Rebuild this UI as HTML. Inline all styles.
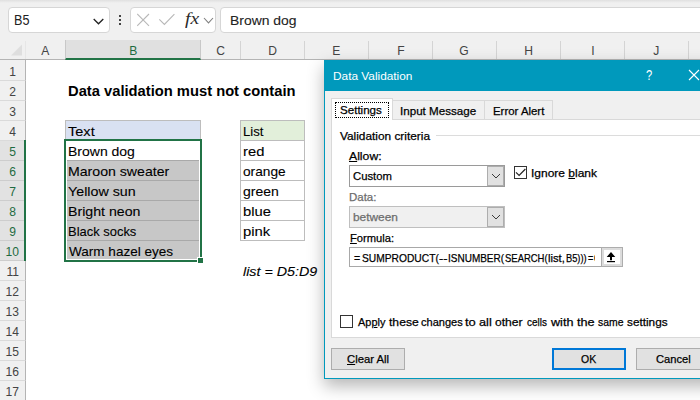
<!DOCTYPE html>
<html><head><meta charset="utf-8"><title>Data validation must not contain</title>
<style>
*{box-sizing:border-box;margin:0;padding:0}
html,body{width:700px;height:400px;overflow:hidden;background:#fff}
body{position:relative;font-family:"Liberation Sans",sans-serif;color:#000}
.a{position:absolute}
.t{position:absolute;white-space:nowrap;line-height:1}
.t>span{display:inline-block;transform-origin:0 50%;white-space:nowrap}
#bar{left:0;top:0;width:700px;height:60px;background:#f0f0f0}
#barhi{left:0;top:0;width:700px;height:3px;background:linear-gradient(#e0e0e0,#f0f0f0)}
.box{background:#fff;border:1px solid #d6d6d6;border-radius:4px}
#colline{left:0;top:59px;width:700px;height:1px;background:#b4b4b4}
.ch{position:absolute;top:41px;height:18px;border-right:1px solid #d4d4d4;font-size:13px;color:#444;text-align:center;line-height:20px}
#rhbg{left:0;top:60px;width:26px;height:340px;background:#f0f0f0;border-right:1px solid #b4b4b4}
.rh{position:absolute;left:0;width:26px;height:20px;border-bottom:1px solid #dadada;border-right:1px solid #b4b4b4;font-size:13px;color:#444;text-align:center;line-height:21px}
.rh.s{background:#e2e2e2;color:#1e6b41;border-right:2px solid #217346;border-bottom-color:#cdcdcd;padding-left:1px}
.cell{position:absolute;height:21px;border:1px solid #bdbdbd;background:#fff}
.cell.g{background:#c7c7c7;border-color:#a9a9a9}
.ch>b,.rh>b{display:inline-block;font-weight:normal;transform:scaleX(.93)}
.ct{font-size:13.2px;color:#000;-webkit-text-stroke-width:0.1px}
.d{font-size:11.5px;color:#000;-webkit-text-stroke-width:0.25px}
</style></head><body>

<!-- formula bar -->
<div class="a" id="bar"></div><div class="a" id="barhi"></div>
<div class="a box" style="left:8px;top:7px;width:102px;height:26px"></div>
<div class="a box" style="left:130px;top:7px;width:86px;height:26px"></div>
<div class="a box" style="left:220px;top:7px;width:500px;height:26px"></div>
<div class="t " style="left:14.48px;top:13px;font-size:14px;color:#222"><span id="nb" style="transform:scaleX(0.9032);">B5</span></div>
<svg class="a" style="left:92px;top:17px" width="13" height="9" viewBox="0 0 13 9"><path d="M1.7 2 L6.5 6.8 L11.3 2" fill="none" stroke="#222" stroke-width="1.3"/></svg>
<div class="a" style="left:119px;top:15px;width:2px;height:2px;background:#444;box-shadow:0 4px 0 #444,0 8px 0 #444"></div>
<svg class="a" style="left:137px;top:13px" width="80" height="16" viewBox="0 0 80 16">
 <path d="M0.2 1 L12 12.8 M12 1 L0.2 12.8" stroke="#b8b8b8" stroke-width="1.1" fill="none"/>
 <path d="M22.3 6.3 L27.4 11.4 L37.4 1.1" stroke="#b8b8b8" stroke-width="1.1" fill="none"/>
 <path d="M67 5 L71.5 9.9 L76 5" stroke="#808080" stroke-width="1.1" fill="none"/>
</svg>
<div class="t " style="left:185.06px;top:10px;font-family:'Liberation Serif',serif;font-style:italic;font-size:17px;color:#2a2a2a"><span id="fx" style="transform:scaleX(1.15);">fx</span></div>
<div class="t ct" style="left:230.41px;top:14px;color:#222"><span id="fb" style="transform:scaleX(1.054);">Brown dog</span></div>

<!-- column headers -->
<div class="a" id="colline"></div>
<svg class="a" style="left:10px;top:44px" width="13" height="12"><path d="M12 0.5 L12 11.5 L1 11.5 Z" fill="#dedede"/></svg>
<div class="ch" style="left:0;width:26px;border-right-color:#e6e6e6"></div>
<div class="ch" style="left:26px;width:39px;border-right:none"><b>A</b></div>
<div class="ch" style="left:65px;top:40px;width:136px;height:20px;line-height:22px;background:#e0e0e0;color:#1e6b41;border-bottom:2px solid #217346;border-left:1px solid #c8c8c8;border-right-color:#c8c8c8"><b>B</b></div>
<div class="ch" style="left:201px;width:40px"><b>C</b></div>
<div class="ch" style="left:241px;width:64px"><b>D</b></div>
<div class="ch" style="left:305px;width:64px"><b>E</b></div>
<div class="ch" style="left:369px;width:64px"><b>F</b></div>
<div class="ch" style="left:433px;width:64px"><b>G</b></div>
<div class="ch" style="left:497px;width:64px"><b>H</b></div>
<div class="ch" style="left:561px;width:64px"><b>I</b></div>
<div class="ch" style="left:625px;width:64px"><b>J</b></div>

<!-- row headers -->
<div class="a" id="rhbg"></div>
<div class="rh" style="top:61px"><b>1</b></div>
<div class="rh" style="top:81px"><b>2</b></div>
<div class="rh" style="top:101px"><b>3</b></div>
<div class="rh" style="top:121px"><b>4</b></div>
<div class="rh s" style="top:141px"><b>5</b></div>
<div class="rh s" style="top:161px"><b>6</b></div>
<div class="rh s" style="top:181px"><b>7</b></div>
<div class="rh s" style="top:201px"><b>8</b></div>
<div class="rh s" style="top:221px"><b>9</b></div>
<div class="rh s" style="top:241px"><b>10</b></div>
<div class="rh" style="top:261px"><b>11</b></div>
<div class="rh" style="top:281px"><b>12</b></div>
<div class="rh" style="top:301px"><b>13</b></div>
<div class="rh" style="top:321px"><b>14</b></div>
<div class="rh" style="top:341px"><b>15</b></div>
<div class="rh" style="top:361px"><b>16</b></div>
<div class="rh" style="top:381px"><b>17</b></div>
<div class="a" style="left:24px;top:140px;width:2px;height:121px;background:#217346"></div>
<!-- sheet cells -->
<div class="t " style="left:67.75px;top:84px;font-size:14px;font-weight:bold"><span id="ttl" style="transform:scaleX(1.052);">Data validation must not contain</span></div>

<div class="cell" style="left:65px;top:120px;width:136px;background:#d9e1f2"></div>
<div class="cell" style="left:65px;top:140px;width:136px"></div>
<div class="cell g" style="left:65px;top:160px;width:136px"></div>
<div class="cell g" style="left:65px;top:180px;width:136px"></div>
<div class="cell g" style="left:65px;top:200px;width:136px"></div>
<div class="cell g" style="left:65px;top:220px;width:136px"></div>
<div class="cell g" style="left:65px;top:240px;width:136px"></div>

<div class="a" style="left:64px;top:139px;width:138px;height:123px;border:2px solid #217346;box-shadow:inset 0 0 0 1px #fff"></div>
<div class="a" style="left:197px;top:257px;width:7px;height:7px;background:#217346;border:1px solid #fff"></div>
<div class="t ct" style="left:68.06px;top:125px;"><span id="c4" style="transform:scaleX(1.104);">Text</span></div>
<div class="t ct" style="left:67.69px;top:145px;"><span id="c5" style="transform:scaleX(1.061);">Brown dog</span></div>
<div class="t ct" style="left:67.68px;top:165px;"><span id="c6" style="transform:scaleX(1.071);">Maroon sweater</span></div>
<div class="t ct" style="left:68.23px;top:185px;"><span id="c7" style="transform:scaleX(1.081);">Yellow sun</span></div>
<div class="t ct" style="left:67.54px;top:205px;"><span id="c8" style="transform:scaleX(1.074);">Bright neon</span></div>
<div class="t ct" style="left:67.77px;top:225px;"><span id="c9" style="transform:scaleX(0.9817);">Black socks</span></div>
<div class="t ct" style="left:68.75px;top:245px;"><span id="c10" style="transform:scaleX(1.027);">Warm hazel eyes</span></div>

<div class="cell" style="left:240px;top:120px;width:65px;background:#e2efda"></div>
<div class="cell" style="left:240px;top:140px;width:65px"></div>
<div class="cell" style="left:240px;top:160px;width:65px"></div>
<div class="cell" style="left:240px;top:180px;width:65px"></div>
<div class="cell" style="left:240px;top:200px;width:65px"></div>
<div class="cell" style="left:240px;top:220px;width:65px"></div>

<div class="t ct" style="left:242.61px;top:125px;"><span id="d4" style="transform:scaleX(0.9949);">List</span></div>
<div class="t ct" style="left:242.76px;top:145px;"><span id="d5" style="transform:scaleX(1.12);">red</span></div>
<div class="t ct" style="left:242.98px;top:165px;"><span id="d6" style="transform:scaleX(1.038);">orange</span></div>
<div class="t ct" style="left:242.97px;top:185px;"><span id="d7" style="transform:scaleX(1.062);">green</span></div>
<div class="t ct" style="left:242.66px;top:205px;"><span id="d8" style="transform:scaleX(1.122);">blue</span></div>
<div class="t ct" style="left:242.65px;top:225px;"><span id="d9" style="transform:scaleX(1.128);">pink</span></div>

<div class="t ct" style="left:243.36px;top:265px;font-style:italic"><span id="d11" style="transform:scaleX(1.084);">list = D5:D9</span></div>

<!-- dialog -->
<div class="a" id="dlg" style="left:324px;top:60px;width:400px;height:319px;background:#f0f0f0;border:1px solid #0099bc;box-shadow:0 7px 16px rgba(0,0,0,.29)"></div>
<div class="a" style="left:324px;top:60px;width:400px;height:31px;background:#0099bc"></div>
<div class="t " style="left:332.8px;top:71px;font-size:11.5px;color:#fff"><span id="dt" style="transform:scaleX(1.029);">Data Validation</span></div>
<div class="t " style="left:646.1px;top:68px;font-size:14px;color:#fff"><span id="qm" style="transform:scaleX(0.8);">?</span></div>
<svg class="a" style="left:686px;top:68px" width="14" height="16"><path d="M3 2 L13 12 M13 2 L3 12" stroke="#fff" stroke-width="1.1" fill="none"/></svg>

<!-- tab page -->
<div class="a" style="left:331px;top:119px;width:400px;height:219px;background:#fff;border:1px solid #d9d9d9"></div>
<div class="a" style="left:393px;top:100px;width:92px;height:20px;background:#f0f0f0;border:1px solid #d9d9d9;border-left:none"></div>
<div class="a" style="left:485px;top:100px;width:68px;height:20px;background:#f0f0f0;border:1px solid #d9d9d9;border-left:none"></div>
<div class="a" style="left:331px;top:98px;width:62px;height:22px;background:#fff;border:1px solid #d9d9d9;border-bottom:none"></div>
<div class="a" style="left:335px;top:102px;width:54px;height:16px;border:1px dotted #000"></div>
<div class="t d" style="left:339.95px;top:105px;"><span id="tb1" style="transform:scaleX(1.007);">Settings</span></div>
<div class="t d" style="left:399.62px;top:106px;"><span id="tb2" style="transform:scaleX(1.01);">Input Message</span></div>
<div class="t d" style="left:493.26px;top:106px;"><span id="tb3" style="transform:scaleX(0.9917);">Error Alert</span></div>

<div class="t d" style="left:340.33px;top:131px;"><span id="vc" style="transform:scaleX(1.03);">Validation criteria</span></div>
<div class="a" style="left:436px;top:135px;width:300px;height:1px;background:#dcdcdc"></div>

<div class="t d" style="left:349.13px;top:151px;"><span id="al" style="transform:scaleX(1.063);"><u>A</u>llow:</span></div>
<div class="a" style="left:349px;top:165px;width:156px;height:22px;background:#fff;border:1px solid #9a9a9a"></div>
<div class="a" style="left:487px;top:166px;width:17px;height:20px;background:#e1e1e1;border:1px solid #adadad"></div>
<svg class="a" style="left:491px;top:173px" width="10" height="7"><path d="M1 1 L5 5 L9 1" stroke="#3a3a3a" stroke-width="1" fill="none"/></svg>
<div class="t d" style="left:353.13px;top:171px;"><span id="cu" style="transform:scaleX(0.9838);">Custom</span></div>

<div class="a" style="left:514px;top:166px;width:13px;height:13px;background:#fff;border:1px solid #333"></div>
<svg class="a" style="left:514px;top:166px" width="13" height="13"><path d="M2 6.4 L5.1 9.4 L11.4 3" stroke="#222" stroke-width="1.2" fill="none"/></svg>
<div class="t d" style="left:530.66px;top:168px;"><span id="ib" style="transform:scaleX(1.043);">Ignore <u>b</u>lank</span></div>

<div class="t d" style="left:348.93px;top:192px;color:#6d6d6d"><span id="da" style="transform:scaleX(0.9981);">Data:</span></div>
<div class="a" style="left:349px;top:206px;width:156px;height:22px;background:#f0f0f0;border:1px solid #bfbfbf"></div>
<div class="a" style="left:487px;top:207px;width:17px;height:20px;background:#e1e1e1;border:1px solid #adadad"></div>
<svg class="a" style="left:491px;top:214px" width="10" height="7"><path d="M1 1 L5 5 L9 1" stroke="#3a3a3a" stroke-width="1" fill="none"/></svg>
<div class="t d" style="left:353.15px;top:212px;color:#6d6d6d"><span id="bt" style="transform:scaleX(1.034);">between</span></div>

<div class="t d" style="left:349.9px;top:233px;"><span id="fo" style="transform:scaleX(0.973);"><u>F</u>ormula:</span></div>
<div class="a" style="left:349px;top:247px;width:274px;height:20px;background:#fff;border:1px solid #a8a8a8"></div>
<div class="a" style="left:352px;top:248px;width:243px;height:18px;overflow:hidden"><div class="t d" style="left:1.66px;top:5px;"><span id="fm_1" style="transform:scaleX(0.9191);">=</span></div><div class="t d" style="left:9.67px;top:5px;"><span id="fm_2" style="transform:scaleX(0.8907);">SUMPRODUCT(</span></div><div class="t d" style="left:86.99px;top:5px;"><span id="fm_3" style="transform:scaleX(1.105);">--</span></div><div class="t d" style="left:95.84px;top:5px;"><span id="fm_4" style="transform:scaleX(0.869);">ISNUMBER(</span></div><div class="t d" style="left:152.59px;top:5px;"><span id="fm_5" style="transform:scaleX(0.8233);">SEARCH(</span></div><div class="t d" style="left:196.39px;top:5px;"><span id="fm_6" style="transform:scaleX(0.9778);">list,</span></div><div class="t d" style="left:214.39px;top:5px;"><span id="fm_7" style="transform:scaleX(0.8082);">B5)))</span></div><div class="t d" style="left:236.01px;top:5px;"><span id="fm_8" style="transform:scaleX(0.783);">=</span></div><div class="t d" style="left:242.33px;top:5px;"><span id="fm_9" style="transform:scaleX(1.089);">0</span></div></div>
<div class="a" style="left:601px;top:247px;width:22px;height:20px;background:#fff;border:1px solid #adadad;box-shadow:inset 0 0 0 2px #dcdcdc"></div>
<svg class="a" style="left:604px;top:250px" width="14" height="14"><path d="M7 2 L11.3 7 L8 7 L8 10.2 L6 10.2 L6 7 L2.7 7 Z" fill="#000"/><rect x="3" y="11" width="8" height="1.2" fill="#000"/></svg>

<div class="a" style="left:340px;top:315px;width:13px;height:13px;background:#fff;border:1px solid #333"></div>
<div class="t d" style="left:357.52px;top:317px;"><span id="ap_1" style="transform:scaleX(0.9511);">Ap<u>p</u>ly</span></div>
<div class="t d" style="left:388.5px;top:317px;"><span id="ap_2" style="transform:scaleX(1.056);">these</span></div>
<div class="t d" style="left:420.74px;top:317px;"><span id="ap_3" style="transform:scaleX(0.9586);">changes</span></div>
<div class="t d" style="left:465.46px;top:317px;"><span id="ap_4" style="transform:scaleX(1.129);">to</span></div>
<div class="t d" style="left:479.29px;top:317px;"><span id="ap_5" style="transform:scaleX(1.105);">all</span></div>
<div class="t d" style="left:495.31px;top:317px;"><span id="ap_6" style="transform:scaleX(1.051);">other</span></div>
<div class="t d" style="left:527.48px;top:317px;"><span id="ap_7" style="transform:scaleX(0.8626);">cells</span></div>
<div class="t d" style="left:551.04px;top:317px;"><span id="ap_8" style="transform:scaleX(1.095);">with</span></div>
<div class="t d" style="left:576.9px;top:317px;"><span id="ap_9" style="transform:scaleX(1.101);">the</span></div>
<div class="t d" style="left:597.77px;top:317px;"><span id="ap_10" style="transform:scaleX(0.9055);">same</span></div>
<div class="t d" style="left:626.54px;top:317px;"><span id="ap_11" style="transform:scaleX(1.025);">settings</span></div>

<div class="a" style="left:331px;top:348px;width:74px;height:22px;background:#e1e1e1;border:1px solid #adadad"></div>
<div class="t d" style="left:347.3px;top:354px;"><span id="ca" style="transform:scaleX(0.9822);"><u>C</u>lear All</span></div>
<div class="a" style="left:552px;top:348px;width:74px;height:22px;background:#e1e1e1;border:2px solid #0078d7"></div>
<div class="t d" style="left:581.16px;top:354px;"><span id="ok" style="transform:scaleX(0.9099);">OK</span></div>
<div class="a" style="left:636px;top:348px;width:74px;height:22px;background:#e1e1e1;border:1px solid #adadad"></div>
<div class="t d" style="left:655.91px;top:354px;"><span id="cn" style="transform:scaleX(0.9704);">Cancel</span></div>

</body></html>
